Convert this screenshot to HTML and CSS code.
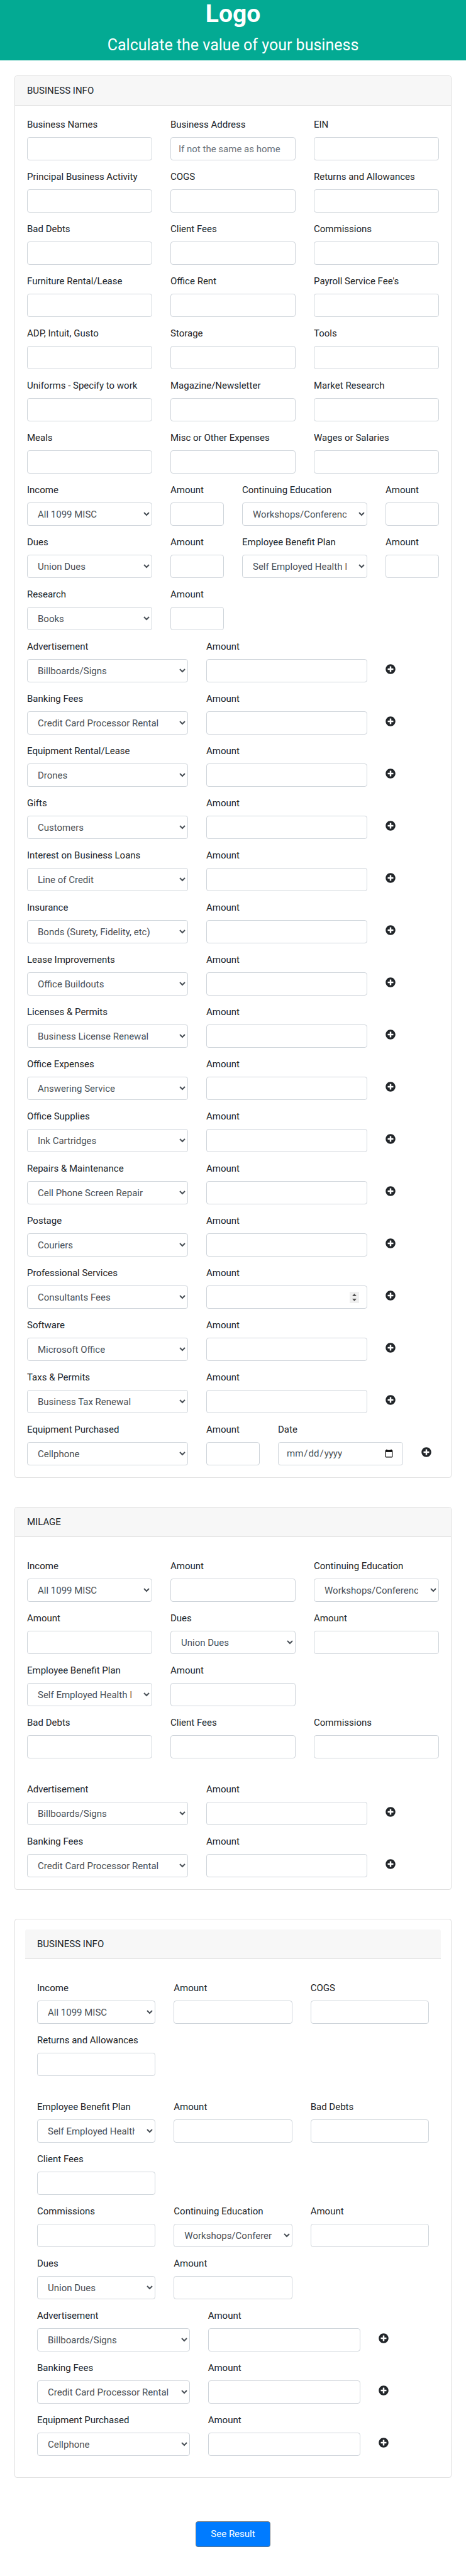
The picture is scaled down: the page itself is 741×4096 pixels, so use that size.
FILE: index.html
```html
<!DOCTYPE html>
<html lang="en">
<head>
<meta charset="utf-8">
<meta name="viewport" content="width=device-width, initial-scale=1">
<title>Calculate the value of your business</title>
<link rel="stylesheet" href="styles.css">
</head>
<body>
<svg class="sprite" aria-hidden="true">
  <symbol id="plus" viewBox="0 0 512 512"><path fill="currentColor" d="M256 8C119 8 8 119 8 256s111 248 248 248 248-111 248-248S393 8 256 8zm144 276c0 6.600-5.400 12-12 12h-92v92c0 6.600-5.400 12-12 12h-56c-6.600 0-12-5.400-12-12v-92h-92c-6.600 0-12-5.400-12-12v-56c0-6.600 5.400-12 12-12h92v-92c0-6.600 5.400-12 12-12h56c6.600 0 12 5.400 12 12v92h92c6.600 0 12 5.400 12 12v56z"/></symbol>
</svg>
<header class="hero">
  <h1 class="logo">Logo</h1>
  <p class="tagline">Calculate the value of your business</p>
</header>
<form class="page">
  <section class="card">
    <h2 class="card-header">BUSINESS INFO</h2>
    <div class="card-body">
      <div class="row">
        <label class="field w4"><span>Business Names</span><input class="control" type="text"></label>
        <label class="field w4"><span>Business Address</span><input class="control" type="text" placeholder="If not the same as home"></label>
        <label class="field w4"><span>EIN</span><input class="control" type="text"></label>
        <label class="field w4"><span>Principal Business Activity</span><input class="control" type="text"></label>
        <label class="field w4"><span>COGS</span><input class="control" type="text"></label>
        <label class="field w4"><span>Returns and Allowances</span><input class="control" type="text"></label>
        <label class="field w4"><span>Bad Debts</span><input class="control" type="text"></label>
        <label class="field w4"><span>Client Fees</span><input class="control" type="text"></label>
        <label class="field w4"><span>Commissions</span><input class="control" type="text"></label>
        <label class="field w4"><span>Furniture Rental/Lease</span><input class="control" type="text"></label>
        <label class="field w4"><span>Office Rent</span><input class="control" type="text"></label>
        <label class="field w4"><span>Payroll Service Fee's</span><input class="control" type="text"></label>
        <label class="field w4"><span>ADP, Intuit, Gusto</span><input class="control" type="text"></label>
        <label class="field w4"><span>Storage</span><input class="control" type="text"></label>
        <label class="field w4"><span>Tools</span><input class="control" type="text"></label>
        <label class="field w4"><span>Uniforms - Specify to work</span><input class="control" type="text"></label>
        <label class="field w4"><span>Magazine/Newsletter</span><input class="control" type="text"></label>
        <label class="field w4"><span>Market Research</span><input class="control" type="text"></label>
        <label class="field w4"><span>Meals</span><input class="control" type="text"></label>
        <label class="field w4"><span>Misc or Other Expenses</span><input class="control" type="text"></label>
        <label class="field w4"><span>Wages or Salaries</span><input class="control" type="text"></label>
      </div>
      <div class="row">
        <label class="field w4"><span>Income</span><select class="control"><option>All 1099 MISC</option></select></label>
        <label class="field w2"><span>Amount</span><input class="control" type="text"></label>
        <label class="field w4"><span>Continuing Education</span><select class="control"><option>Workshops/Conferences</option></select></label>
        <label class="field w2"><span>Amount</span><input class="control" type="text"></label>
        <label class="field w4"><span>Dues</span><select class="control"><option>Union Dues</option></select></label>
        <label class="field w2"><span>Amount</span><input class="control" type="text"></label>
        <label class="field w4"><span>Employee Benefit Plan</span><select class="control"><option>Self Employed Health Insurance</option></select></label>
        <label class="field w2"><span>Amount</span><input class="control" type="text"></label>
        <label class="field w4"><span>Research</span><select class="control"><option>Books</option></select></label>
        <label class="field w2"><span>Amount</span><input class="control" type="text"></label>
      </div>
      <div class="row">
        <label class="field w5"><span>Advertisement</span><select class="control"><option>Billboards/Signs</option></select></label>
        <label class="field w5"><span>Amount</span><input class="control" type="text"></label>
        <button class="add" type="button" aria-label="Add advertisement"><svg class="icon"><use href="#plus"/></svg></button>
      </div>
      <div class="row">
        <label class="field w5"><span>Banking Fees</span><select class="control"><option>Credit Card Processor Rental</option></select></label>
        <label class="field w5"><span>Amount</span><input class="control" type="text"></label>
        <button class="add" type="button" aria-label="Add banking fee"><svg class="icon"><use href="#plus"/></svg></button>
      </div>
      <div class="row">
        <label class="field w5"><span>Equipment Rental/Lease</span><select class="control"><option>Drones</option></select></label>
        <label class="field w5"><span>Amount</span><input class="control" type="text"></label>
        <button class="add" type="button" aria-label="Add equipment rental"><svg class="icon"><use href="#plus"/></svg></button>
      </div>
      <div class="row">
        <label class="field w5"><span>Gifts</span><select class="control"><option>Customers</option></select></label>
        <label class="field w5"><span>Amount</span><input class="control" type="text"></label>
        <button class="add" type="button" aria-label="Add gift"><svg class="icon"><use href="#plus"/></svg></button>
      </div>
      <div class="row">
        <label class="field w5"><span>Interest on Business Loans</span><select class="control"><option>Line of Credit</option></select></label>
        <label class="field w5"><span>Amount</span><input class="control" type="text"></label>
        <button class="add" type="button" aria-label="Add loan interest"><svg class="icon"><use href="#plus"/></svg></button>
      </div>
      <div class="row">
        <label class="field w5"><span>Insurance</span><select class="control"><option>Bonds (Surety, Fidelity, etc)</option></select></label>
        <label class="field w5"><span>Amount</span><input class="control" type="text"></label>
        <button class="add" type="button" aria-label="Add insurance"><svg class="icon"><use href="#plus"/></svg></button>
      </div>
      <div class="row">
        <label class="field w5"><span>Lease Improvements</span><select class="control"><option>Office Buildouts</option></select></label>
        <label class="field w5"><span>Amount</span><input class="control" type="text"></label>
        <button class="add" type="button" aria-label="Add lease improvement"><svg class="icon"><use href="#plus"/></svg></button>
      </div>
      <div class="row">
        <label class="field w5"><span>Licenses &amp; Permits</span><select class="control"><option>Business License Renewal</option></select></label>
        <label class="field w5"><span>Amount</span><input class="control" type="text"></label>
        <button class="add" type="button" aria-label="Add license"><svg class="icon"><use href="#plus"/></svg></button>
      </div>
      <div class="row">
        <label class="field w5"><span>Office Expenses</span><select class="control"><option>Answering Service</option></select></label>
        <label class="field w5"><span>Amount</span><input class="control" type="text"></label>
        <button class="add" type="button" aria-label="Add office expense"><svg class="icon"><use href="#plus"/></svg></button>
      </div>
      <div class="row">
        <label class="field w5"><span>Office Supplies</span><select class="control"><option>Ink Cartridges</option></select></label>
        <label class="field w5"><span>Amount</span><input class="control" type="text"></label>
        <button class="add" type="button" aria-label="Add office supply"><svg class="icon"><use href="#plus"/></svg></button>
      </div>
      <div class="row">
        <label class="field w5"><span>Repairs &amp; Maintenance</span><select class="control"><option>Cell Phone Screen Repair</option></select></label>
        <label class="field w5"><span>Amount</span><input class="control" type="text"></label>
        <button class="add" type="button" aria-label="Add repair"><svg class="icon"><use href="#plus"/></svg></button>
      </div>
      <div class="row">
        <label class="field w5"><span>Postage</span><select class="control"><option>Couriers</option></select></label>
        <label class="field w5"><span>Amount</span><input class="control" type="text"></label>
        <button class="add" type="button" aria-label="Add postage"><svg class="icon"><use href="#plus"/></svg></button>
      </div>
      <div class="row">
        <label class="field w5"><span>Professional Services</span><select class="control"><option>Consultants Fees</option></select></label>
        <label class="field w5"><span>Amount</span><input class="control stepper" type="number"></label>
        <button class="add" type="button" aria-label="Add professional service"><svg class="icon"><use href="#plus"/></svg></button>
      </div>
      <div class="row">
        <label class="field w5"><span>Software</span><select class="control"><option>Microsoft Office</option></select></label>
        <label class="field w5"><span>Amount</span><input class="control" type="text"></label>
        <button class="add" type="button" aria-label="Add software"><svg class="icon"><use href="#plus"/></svg></button>
      </div>
      <div class="row">
        <label class="field w5"><span>Taxs &amp; Permits</span><select class="control"><option>Business Tax Renewal</option></select></label>
        <label class="field w5"><span>Amount</span><input class="control" type="text"></label>
        <button class="add" type="button" aria-label="Add tax"><svg class="icon"><use href="#plus"/></svg></button>
      </div>
      <div class="row">
        <label class="field w5"><span>Equipment Purchased</span><select class="control"><option>Cellphone</option></select></label>
        <label class="field w2"><span>Amount</span><input class="control" type="text"></label>
        <label class="field w4"><span>Date</span><input class="control" type="date"></label>
        <button class="add" type="button" aria-label="Add equipment"><svg class="icon"><use href="#plus"/></svg></button>
      </div>
    </div>
  </section>

  <section class="card">
    <h2 class="card-header">MILAGE</h2>
    <div class="card-body spaced">
      <div class="row">
        <label class="field w4"><span>Income</span><select class="control"><option>All 1099 MISC</option></select></label>
        <label class="field w4"><span>Amount</span><input class="control" type="text"></label>
        <label class="field w4"><span>Continuing Education</span><select class="control"><option>Workshops/Conferences</option></select></label>
        <label class="field w4"><span>Amount</span><input class="control" type="text"></label>
        <label class="field w4"><span>Dues</span><select class="control"><option>Union Dues</option></select></label>
        <label class="field w4"><span>Amount</span><input class="control" type="text"></label>
        <label class="field w4"><span>Employee Benefit Plan</span><select class="control"><option>Self Employed Health Insurance</option></select></label>
        <label class="field w4"><span>Amount</span><input class="control" type="text"></label>
      </div>
      <div class="row">
        <label class="field w4"><span>Bad Debts</span><input class="control" type="text"></label>
        <label class="field w4"><span>Client Fees</span><input class="control" type="text"></label>
        <label class="field w4"><span>Commissions</span><input class="control" type="text"></label>
      </div>
      <div class="row apart">
        <label class="field w5"><span>Advertisement</span><select class="control"><option>Billboards/Signs</option></select></label>
        <label class="field w5"><span>Amount</span><input class="control" type="text"></label>
        <button class="add" type="button" aria-label="Add advertisement"><svg class="icon"><use href="#plus"/></svg></button>
      </div>
      <div class="row">
        <label class="field w5"><span>Banking Fees</span><select class="control"><option>Credit Card Processor Rental</option></select></label>
        <label class="field w5"><span>Amount</span><input class="control" type="text"></label>
        <button class="add" type="button" aria-label="Add banking fee"><svg class="icon"><use href="#plus"/></svg></button>
      </div>
    </div>
  </section>

  <section class="card inset">
    <h2 class="card-header">BUSINESS INFO</h2>
    <div class="card-body spaced">
      <div class="row">
        <label class="field w4"><span>Income</span><select class="control"><option>All 1099 MISC</option></select></label>
        <label class="field w4"><span>Amount</span><input class="control" type="text"></label>
        <label class="field w4"><span>COGS</span><input class="control" type="text"></label>
        <label class="field w4"><span>Returns and Allowances</span><input class="control" type="text"></label>
      </div>
      <div class="row apart">
        <label class="field w4"><span>Employee Benefit Plan</span><select class="control"><option>Self Employed Health Insurance</option></select></label>
        <label class="field w4"><span>Amount</span><input class="control" type="text"></label>
        <label class="field w4"><span>Bad Debts</span><input class="control" type="text"></label>
        <label class="field w4"><span>Client Fees</span><input class="control" type="text"></label>
      </div>
      <div class="row">
        <label class="field w4"><span>Commissions</span><input class="control" type="text"></label>
        <label class="field w4"><span>Continuing Education</span><select class="control"><option>Workshops/Conferences</option></select></label>
        <label class="field w4"><span>Amount</span><input class="control" type="text"></label>
        <label class="field w4"><span>Dues</span><select class="control"><option>Union Dues</option></select></label>
        <label class="field w4"><span>Amount</span><input class="control" type="text"></label>
      </div>
      <div class="row">
        <label class="field w5"><span>Advertisement</span><select class="control"><option>Billboards/Signs</option></select></label>
        <label class="field w5"><span>Amount</span><input class="control" type="text"></label>
        <button class="add" type="button" aria-label="Add advertisement"><svg class="icon"><use href="#plus"/></svg></button>
      </div>
      <div class="row">
        <label class="field w5"><span>Banking Fees</span><select class="control"><option>Credit Card Processor Rental</option></select></label>
        <label class="field w5"><span>Amount</span><input class="control" type="text"></label>
        <button class="add" type="button" aria-label="Add banking fee"><svg class="icon"><use href="#plus"/></svg></button>
      </div>
      <div class="row">
        <label class="field w5"><span>Equipment Purchased</span><select class="control"><option>Cellphone</option></select></label>
        <label class="field w5"><span>Amount</span><input class="control" type="text"></label>
        <button class="add" type="button" aria-label="Add equipment"><svg class="icon"><use href="#plus"/></svg></button>
      </div>
    </div>
  </section>

  <button class="submit" type="submit">See Result</button>
</form>
</body>
</html>
```
FILE: styles.css
```css
*, *::before, *::after {
  box-sizing: border-box;
}

body {
  margin: 0;
  background: #fff;
  color: #212529;
  font-family: Roboto, "Liberation Sans", sans-serif;
  font-size: 15px;
  line-height: 23px;
}

.sprite {
  position: absolute;
  width: 0;
  height: 0;
}

.hero {
  padding-bottom: 6px;
  background: #03aa93;
  color: #fff;
  text-align: center;
}

.logo {
  margin: 0 0 9px;
  font-size: 39px;
  font-weight: 700;
  line-height: 45px;
}

.tagline {
  margin: 0;
  font-size: 25px;
  line-height: 36px;
}

.page {
  display: flex;
  flex-direction: column;
  gap: 46px;
  padding: 24px 23px 46px;
}

.card {
  border: 1px solid #dfdfdf;
  border-radius: 4px;
  background: #fff;
}

.card-header {
  margin: 0;
  padding: 12px 19px 11px;
  border-bottom: 1px solid #dfdfdf;
  border-radius: 3px 3px 0 0;
  background: #f7f7f7;
  font-size: 15px;
  font-weight: 400;
  line-height: 23px;
}

.card-body {
  display: flex;
  flex-direction: column;
  gap: 15px;
  padding: 19px;
}

.spaced {
  padding-top: 35px;
}

.inset {
  padding: 16px 16px 15px;
}

.row {
  display: grid;
  grid-template-columns: repeat(12, minmax(0, 1fr));
  gap: 15px 29px;
}

.apart {
  margin-top: 23px;
}

.field {
  display: flex;
  flex-direction: column;
  gap: 8px;
  min-width: 0;
  white-space: nowrap;
}

.w2 { grid-column: span 2; }
.w4 { grid-column: span 4; }
.w5 { grid-column: span 5; }

.control {
  width: 100%;
  height: 37px;
  margin: 0;
  padding: 6px 12px;
  border: 1px solid #ced4da;
  border-radius: 4px;
  background: #fff;
  color: #495057;
  font: inherit;
}

select.control {
  padding-right: 16px;
}

.control::placeholder {
  color: #6c757d;
  opacity: 1;
}

.stepper::-webkit-inner-spin-button {
  width: 15px;
  height: 18px;
  appearance: none;
  background: #efefef url("data:image/svg+xml,%3Csvg xmlns='http://www.w3.org/2000/svg' viewBox='0 0 15 18'%3E%3Cpath fill='%23505050' d='M4 7l3.500-4L11 7zM4 11l3.500 4L11 11z'/%3E%3C/svg%3E") center / 15px 18px no-repeat;
  opacity: 1;
}

.add {
  display: flex;
  align-items: center;
  height: 31px;
  margin: 31px 0 0;
  padding: 0;
  border: 0;
  background: none;
  color: #212529;
}

.icon {
  flex: none;
  width: 16px;
  height: 16px;
}

.submit {
  align-self: center;
  height: 41px;
  margin-top: 23px;
  padding: 0 23px;
  border: 1px solid #6c757d;
  border-radius: 4px;
  background: #007bff;
  color: #fff;
  font: inherit;
}
```
